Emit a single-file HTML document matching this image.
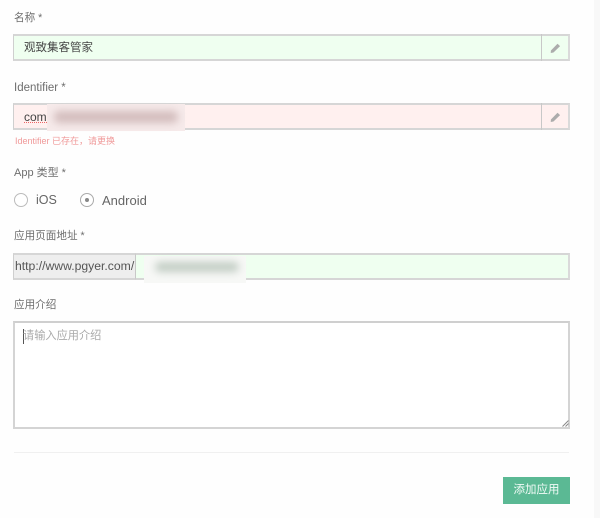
<!DOCTYPE html>
<html>
<head>
<meta charset="utf-8">
<style>
html,body{margin:0;padding:0;width:600px;height:518px;overflow:hidden;background:#fefefe;}
body{position:relative;font-family:"Liberation Sans","Noto Sans CJK SC",sans-serif;color:#666;}
#w{position:absolute;left:0;top:0;width:600px;height:518px;filter:blur(0.35px);}
.a{position:absolute;white-space:nowrap;}
.l{font-size:10.6px;line-height:14px;color:#6e6e6e;left:14px;}
.box{position:absolute;box-sizing:border-box;left:13px;width:557px;height:27px;border:2px solid #d6d6d6;border-left:1px solid #cfcfcf;border-right:2px solid #dadada;}
.sep{position:absolute;left:541px;width:1px;height:27px;background:#c8c8c8;}
.blur{position:absolute;filter:blur(4px);}
</style>
</head>
<body>
<div id="w">
<div class="a" style="left:594px;top:0;width:6px;height:518px;background:#f8f8f8"></div>

<div class="a l" style="top:11px">名称 *</div>
<div class="box" style="top:34px;background:#effff0"></div>
<div class="sep" style="top:34px"></div>
<div class="a" style="left:24px;top:40px;font-size:11.5px;line-height:17px;color:#444">观致集客管家</div>
<svg class="a" style="left:550px;top:42px" width="11" height="12" viewBox="0 0 12 13"><path d="M1 9.2 L8.2 1.8 L11 4.4 L3.8 11.4 L0.8 12 Z" fill="#acacac"/></svg>

<div class="a l" style="top:81px;font-size:11.5px">Identifier *</div>
<div class="box" style="top:103px;background:#fff0ef"></div>
<div class="sep" style="top:103px"></div>
<div class="a" style="left:24px;top:109px;font-size:12px;line-height:16px;color:#444">com.</div>
<div class="a" style="left:24px;top:122px;width:23px;height:1px;border-top:1px dotted #e66"></div>
<div class="a" style="left:47px;top:104px;width:138px;height:27px;background:#f6eaea"></div>
<div class="blur" style="left:54px;top:111px;width:124px;height:12px;background:#d3bdbd;border-radius:5px"></div>
<svg class="a" style="left:550px;top:111px" width="11" height="12" viewBox="0 0 12 13"><path d="M1 9.2 L8.2 1.8 L11 4.4 L3.8 11.4 L0.8 12 Z" fill="#acacac"/></svg>
<div class="a" style="left:15px;top:135px;font-size:9px;line-height:13px;color:#f09a9a">Identifier 已存在，请更换</div>

<div class="a l" style="top:166px;font-size:11px">App 类型 *</div>
<div class="a" style="left:14px;top:193px;width:12px;height:12px;border:1px solid #bbb;border-radius:50%;background:#fff"></div>
<div class="a" style="left:36px;top:193px;font-size:12.5px;line-height:15px;color:#666">iOS</div>
<div class="a" style="left:80px;top:193px;width:12px;height:12px;border:1px solid #aaa;border-radius:50%;background:#fff"></div>
<div class="a" style="left:85px;top:198px;width:4px;height:4px;border-radius:50%;background:#888"></div>
<div class="a" style="left:102px;top:193px;font-size:13px;line-height:15px;color:#666">Android</div>

<div class="a l" style="top:229px">应用页面地址 *</div>
<div class="box" style="top:253px;background:#effff0"></div>
<div class="a" style="left:13px;top:253px;width:123px;height:27px;box-sizing:border-box;background:#eee;border:2px solid #d6d6d6;border-left:1px solid #cfcfcf;border-right:1px solid #c8c8c8"></div>
<div class="a" style="left:15px;top:259px;font-size:12.2px;line-height:14px;color:#555">http://www.pgyer.com/</div>
<div class="a" style="left:144px;top:256px;width:102px;height:27px;background:#f7f8f6"></div>
<div class="blur" style="left:155px;top:262px;width:84px;height:10px;background:#c2cdc4;border-radius:5px"></div>

<div class="a l" style="top:298px">应用介绍</div>
<div class="a" style="left:13px;top:321px;width:557px;height:108px;box-sizing:border-box;background:#fff;border:2px solid #d4d4d4;border-top:2px solid #cfcfcf"></div>
<div class="a" style="left:23px;top:329px;width:1px;height:15px;background:#555"></div>
<div class="a" style="left:23px;top:329px;font-size:11.2px;line-height:15px;color:#aaa">请输入应用介绍</div>
<svg class="a" style="left:562px;top:420px" width="7" height="7" viewBox="0 0 7 7"><path d="M0.5 6.5 L6.5 0.5 M3.5 6.5 L6.5 3.5" stroke="#888" stroke-width="1"/></svg>

<div class="a" style="left:14px;top:452px;width:555px;height:1px;background:#f0f0f0"></div>

<div class="a" style="left:503px;top:477px;width:67px;height:27px;background:#5bb994;color:#f2fbf7;font-size:11.5px;line-height:27px;text-align:center">添加应用</div>
</div>
</body>
</html>
